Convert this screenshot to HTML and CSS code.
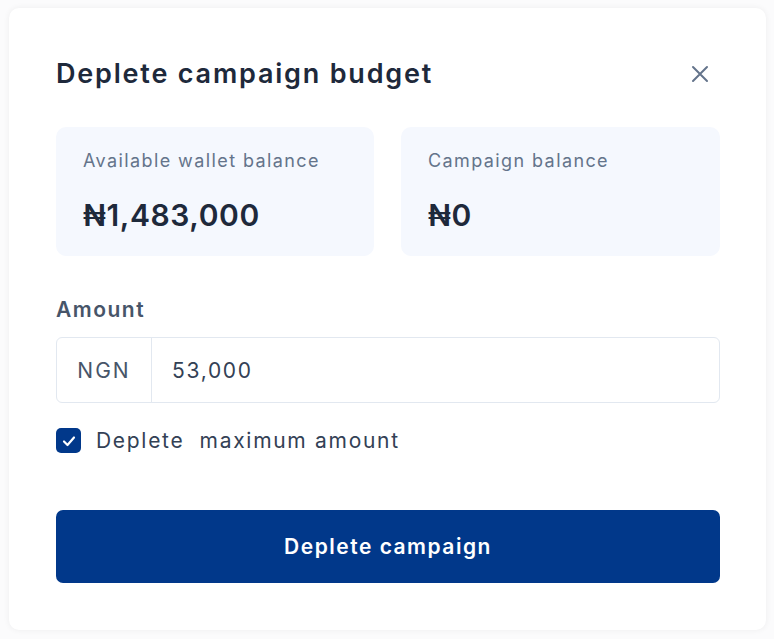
FILE: index.html
```html
<!DOCTYPE html>
<html lang="en">
<head>
<meta charset="utf-8">
<title>Deplete campaign budget</title>
<link rel="stylesheet" href="styles.css">
</head>
<body>
<div class="modal">
  <div class="header">
    <h1 class="title">Deplete campaign budget</h1>
    <button class="close" aria-label="Close">
      <svg width="18" height="18" viewBox="0 0 18 18"><path d="M2 2 L16 16 M16 2 L2 16" stroke="#64748b" stroke-width="2" stroke-linecap="round"/></svg>
    </button>
  </div>
  <div class="stats">
    <div class="stat">
      <div class="stat-label">Available wallet balance</div>
      <div class="stat-value">₦1,483,000</div>
    </div>
    <div class="stat">
      <div class="stat-label">Campaign balance</div>
      <div class="stat-value">₦0</div>
    </div>
  </div>
  <div class="field-label">Amount</div>
  <div class="input">
    <div class="prefix">NGN</div>
    <div class="value">53,000</div>
  </div>
  <label class="check-row">
    <span class="checkbox">
      <svg width="16" height="16" viewBox="0 0 16 16"><path d="M3 8.5 L6.5 12 L13 4.5" fill="none" stroke="#fff" stroke-width="2.2" stroke-linecap="round" stroke-linejoin="round"/></svg>
    </span>
    <span class="check-label">Deplete&nbsp; maximum amount</span>
  </label>
  <button class="primary">Deplete campaign</button>
</div>
</body>
</html>
```
FILE: styles.css
```css
* { box-sizing: border-box; }
html, body { margin: 0; }
body {
  background: #fbfbfc;
  padding: 8px 8px 0 9px;
  font-family: Inter, "Noto Sans", sans-serif;
  width: 774px;
  height: 639px;
  overflow: hidden;
}
.modal {
  width: 757px;
  height: 622px;
  background: #fff;
  border-radius: 10px;
  box-shadow: 0 0 6px rgba(15, 23, 42, 0.06);
  padding: 50px 46px 47px 47px;
  display: flex;
  flex-direction: column;
}
.header {
  display: flex;
  justify-content: space-between;
  align-items: center;
  height: 32px;
}
.title {
  margin: 0;
  font-size: 27px;
  line-height: 32px;
  font-weight: 600;
  color: #1e293b;
  letter-spacing: 1.8px;
}
.close {
  border: 0;
  background: none;
  padding: 0;
  width: 18px;
  height: 18px;
  margin-right: 11px;
  display: flex;
}
.stats {
  margin-top: 37px;
  display: grid;
  grid-template-columns: 318px 319px;
  gap: 27px;
}
.stat {
  background: #f5f8fe;
  border-radius: 10px;
  height: 129px;
  padding: 22px 27px;
}
.stat-label {
  font-size: 18px;
  line-height: 24px;
  color: #64748b;
  letter-spacing: 1.4px;
}
.stat-value {
  margin-top: 24px;
  font-size: 30px;
  line-height: 36px;
  font-weight: 600;
  color: #1e293b;
  letter-spacing: 0.6px;
}
.field-label {
  margin-top: 42px;
  font-size: 21px;
  line-height: 24px;
  font-weight: 600;
  color: #475569;
  letter-spacing: 1.5px;
}
.input {
  margin-top: 15px;
  height: 66px;
  border: 1px solid #e2e8f0;
  border-radius: 6px;
  display: flex;
}
.prefix {
  width: 95px;
  border-right: 1px solid #e2e8f0;
  display: flex;
  align-items: center;
  justify-content: center;
  font-size: 21px;
  color: #475569;
  letter-spacing: 2px;
}
.value {
  padding-left: 20px;
  display: flex;
  align-items: center;
  font-size: 21px;
  color: #334155;
  letter-spacing: 1.7px;
}
.check-row {
  margin-top: 25px;
  display: flex;
  align-items: center;
  gap: 15px;
  height: 25px;
}
.checkbox {
  width: 25px;
  height: 25px;
  border-radius: 5px;
  background: #01388a;
  display: flex;
  align-items: center;
  justify-content: center;
}
.check-label {
  font-size: 21px;
  color: #334155;
  letter-spacing: 1.7px;
}
.primary {
  margin-top: 57px;
  height: 73px;
  border: 0;
  border-radius: 7px;
  background: #01388a;
  color: #fff;
  font-family: inherit;
  font-size: 21px;
  font-weight: 600;
  letter-spacing: 1.5px;
}
```
